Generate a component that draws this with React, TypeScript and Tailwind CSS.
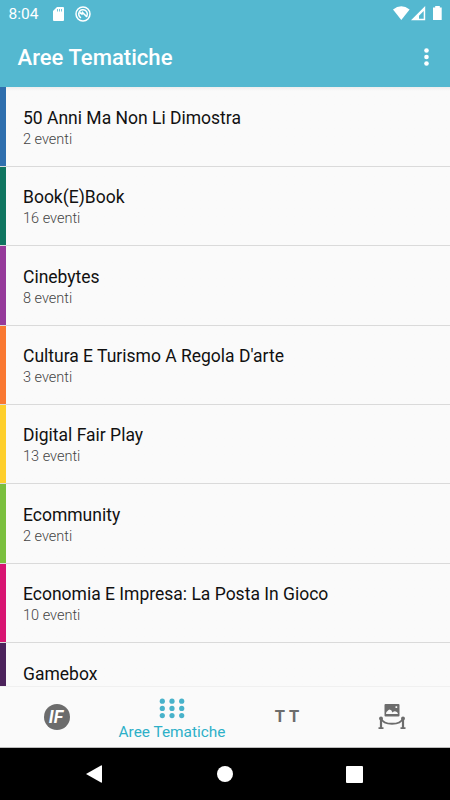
const areas = [
  { name: "50 Anni Ma Non Li Dimostra", events: 2, color: "bg-[#2f6fae]" },
  { name: "Book(E)Book", events: 16, color: "bg-[#0f7560]" },
  { name: "Cinebytes", events: 8, color: "bg-[#963a9b]" },
  { name: "Cultura E Turismo A Regola D'arte", events: 3, color: "bg-[#f97831]" },
  { name: "Digital Fair Play", events: 13, color: "bg-[#fecf2c]" },
  { name: "Ecommunity", events: 2, color: "bg-[#7abf3e]" },
  { name: "Economia E Impresa: La Posta In Gioco", events: 10, color: "bg-[#d81472]" },
  { name: "Gamebox", events: null, color: "bg-[#4c235c]" },
];

const dots = [0, 1, 2];

function StatusBar() {
  return (
    <div className="flex h-7 items-center justify-between pl-[8.5px] pr-2 text-white">
      <div className="flex items-center">
        <span className="w-[44.5px] text-[15.5px] leading-7">8:04</span>
        <svg className="-mt-px" width="11" height="14" viewBox="0 0 11 14" fill="currentColor">
          <path d="M4 0H10Q11 0 11 1V13Q11 14 10 14H1Q0 14 0 13V4Z" />
          <path d="M4.500 2v2.500M6.500 2v2.500M8.500 2v2.500" stroke="#54b8d0" strokeWidth="0.800" />
        </svg>
        <svg className="-mt-px ml-[10.5px]" width="16" height="16" viewBox="0 0 16 16" fill="none" stroke="currentColor">
          <circle cx="8" cy="8" r="7" strokeWidth="1.500" />
          <path d="M11.500 10.500A4.300 4.300 0 1 0 6 11.800" strokeWidth="1.500" />
          <path d="M4.500 6.500L7 8L7.500 6.500L12 11" strokeWidth="1.600" />
        </svg>
      </div>
      <svg className="-mt-0.5" width="49" height="15" viewBox="0 0 49 15" fill="currentColor">
        <path d="M0 3.500Q8.300 -2.800 16.600 3.500L8.300 14Z" />
        <path fillRule="evenodd" d="M32.200 0V14.300H18ZM30.700 5L26 9.700V12.800H30.700Z" />
        <path d="M42.200 0H46.800V1.500H48.700V14H40V1.500H42.200Z" />
      </svg>
    </div>
  );
}

function GridIcon() {
  return (
    <svg width="26" height="21" viewBox="0 0 26 21" fill="#48b2ca">
      {dots.map((row) =>
        dots.map((col) => (
          <circle key={`${row}-${col}`} cx={3.3 + col * 9.7} cy={3.2 + row * 7.2} r="2.6" />
        ))
      )}
    </svg>
  );
}

function ExhibitIcon() {
  return (
    <svg width="28" height="26" viewBox="0 0 28 26" fill="#6c6c6c">
      <path
        fillRule="evenodd"
        d="M7.500 0H20.500Q21.500 0 21.500 1V11.500Q21.500 12.500 20.500 12.500H7.500Q6.500 12.500 6.500 11.500V1Q6.500 0 7.500 0ZM8 10H20Q19.500 7.500 17.800 7.500Q16.500 6.500 14.500 8.500Q13.500 5.500 11.500 5.500Q10.500 5.500 9.500 7Q8 7.500 8 10ZM17.500 2.300V4H19.200V2.300Z"
      />
      <path d="M3 14.500Q5 19.800 14 19.800Q23 19.800 25 14.500" fill="none" stroke="#6c6c6c" strokeWidth="1.900" />
      <path d="M1.900 13H4.100V23.300H5.500V25H0.500V23.300H1.900ZM23.900 13H26.100V23.300H27.500V25H22.500V23.300H23.900Z" />
      <circle cx="3" cy="14.500" r="1.900" />
      <circle cx="25" cy="14.500" r="1.900" />
    </svg>
  );
}

export default function App() {
  return (
    <div className="flex h-[800px] w-[450px] flex-col overflow-hidden bg-[#fafafa] font-['Roboto',sans-serif]">
      <header className="h-[87px] shrink-0 bg-[#54b8d0]">
        <StatusBar />
        <div className="flex h-[59px] items-center justify-between pl-[17.5px] pr-[21.5px] text-white">
          <h1 className="text-[22.1px] font-medium leading-none">Aree Tematiche</h1>
          <svg className="-mt-px" width="5" height="18" viewBox="0 0 5 18" fill="currentColor">
            {dots.map((i) => (
              <circle key={i} cx="2.5" cy={2.5 + i * 6.5} r="2.3" />
            ))}
          </svg>
        </div>
      </header>

      <main className="min-h-0 flex-1 overflow-hidden bg-linear-to-b from-[#ededed] to-[#fafafa] to-[4px] pt-[0.4px]">
        {areas.map(({ name, events, color }) => (
          <div key={name} className="flex h-[79.39px] border-b border-[#dadada]">
            <div className={`w-[5.5px] shrink-0 ${color}`} />
            <div className="pl-[17.5px] pt-[18.6px]">
              <div className="text-[17.5px] leading-6 text-[#111]">{name}</div>
              {events !== null && (
                <div className="text-[14.5px] font-light leading-5 text-[#444]">{events} eventi</div>
              )}
            </div>
          </div>
        ))}
      </main>

      <nav className="grid h-[62px] shrink-0 grid-cols-[113px_118px_112px_98px] border-b border-t border-b-[#bbb] border-t-[#f0f0f0]">
        <div className="flex items-center justify-center">
          <div className="flex size-[26px] items-center justify-center rounded-full bg-[#6c6c6c] pr-px pt-px text-[17.5px] font-bold italic leading-none text-white">
            IF
          </div>
        </div>
        <div className="flex flex-col items-center pt-[11px] text-[#2db0c8]">
          <GridIcon />
          <span className="mt-[2.5px] text-[15.4px] leading-5">Aree Tematiche</span>
        </div>
        <div className="flex items-center justify-center text-[16.5px] font-bold leading-none text-[#6c6c6c] [word-spacing:1px]">
          T T
        </div>
        <div className="flex items-center justify-center">
          <ExhibitIcon />
        </div>
      </nav>

      <footer className="flex h-[52px] shrink-0 items-center justify-between bg-black pl-[86px] pr-[87px] text-white">
        <svg width="16" height="18" viewBox="0 0 16 18" fill="currentColor">
          <path d="M0 9L15 0.500Q16 0 16 1V17Q16 18 15 17.500Z" />
        </svg>
        <div className="ml-[1.5px] size-4 rounded-full bg-white" />
        <div className="size-[17px] rounded-[1px] bg-white" />
      </footer>
    </div>
  );
}
